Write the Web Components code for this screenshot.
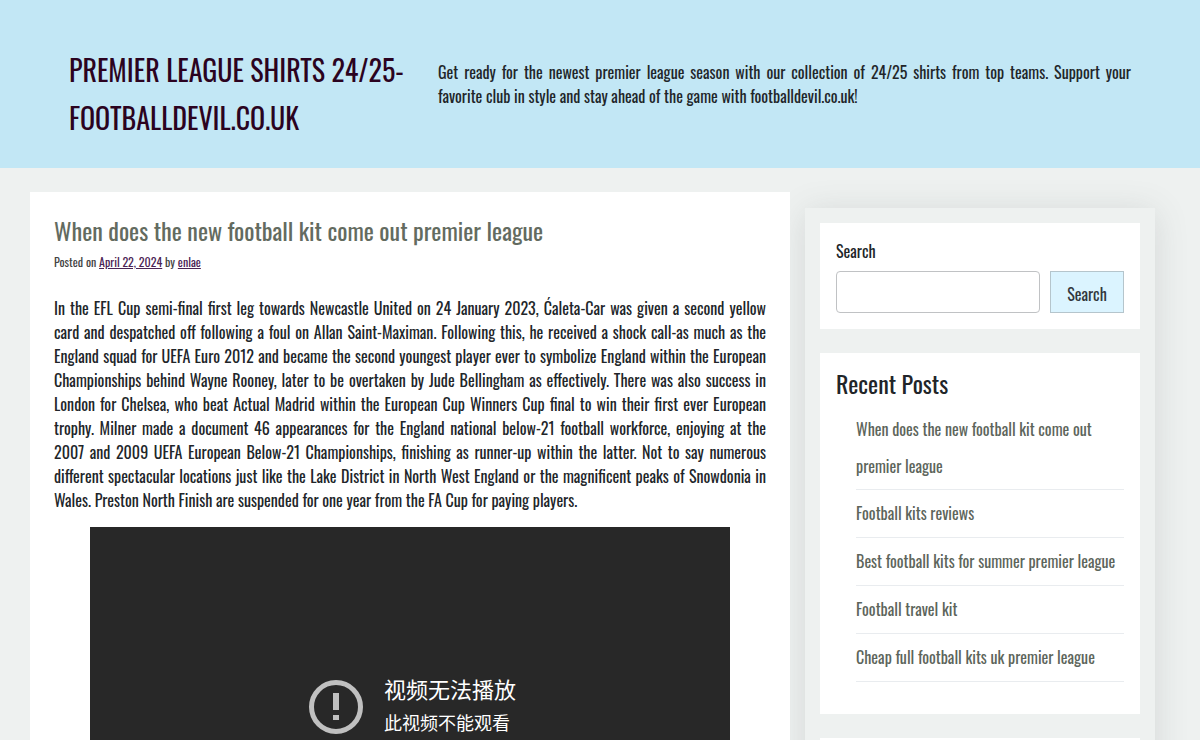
<!DOCTYPE html>
<html lang="en">
<head>
<meta charset="utf-8">
<meta name="viewport" content="width=device-width, initial-scale=1">
<title>Premier League Shirts 24/25</title>
<style>
  html { scrollbar-width: none; }
  body {
    margin: 0;
    background: #eef1f0;
    color: #212529;
    font: 400 16px/24px Oswald, "Liberation Sans Narrow", "Liberation Sans", sans-serif;
  }
</style>
</head>
<body>
<blog-page>
  <site-header slot="header">
    <a slot="title" href="#">Premier League Shirts 24/25-footballdevil.co.uk</a>
    Get ready for the newest premier league season with our collection of 24/25 shirts from top teams. Support your favorite club in style and stay ahead of the game with footballdevil.co.uk!
  </site-header>

  <blog-post>
    <a slot="title" href="#">When does the new football kit come out premier league</a>
    <a slot="date" href="#">April 22, 2024</a>
    <a slot="author" href="#">enlae</a>
    <span slot="text">In the EFL Cup semi-final first leg towards Newcastle United on 24 January 2023, Ćaleta-Car was given a second yellow card and despatched off following a foul on Allan Saint-Maximan. Following this, he received a shock call-as much as the England squad for UEFA Euro 2012 and became the second youngest player ever to symbolize England within the European Championships behind Wayne Rooney, later to be overtaken by Jude Bellingham as effectively. There was also success in London for Chelsea, who beat Actual Madrid within the European Cup Winners Cup final to win their first ever European trophy. Milner made a document 46 appearances for the England national below-21 football workforce, enjoying at the 2007 and 2009 UEFA European Below-21 Championships, finishing as runner-up within the latter. Not to say numerous different spectacular locations just like the Lake District in North West England or the magnificent peaks of Snowdonia in Wales. Preston North Finish are suspended for one year from the FA Cup for paying players.</span>
    <video-notice slot="media">
      <span slot="title">视频无法播放</span>
      <span slot="detail">此视频不能观看</span>
    </video-notice>
  </blog-post>

  <side-widget slot="sidebar"><search-form></search-form></side-widget>
  <side-widget slot="sidebar">
    <recent-posts>
      <post-link>When does the new football kit come out premier league</post-link>
      <post-link>Football kits reviews</post-link>
      <post-link>Best football kits for summer premier league</post-link>
      <post-link>Football travel kit</post-link>
      <post-link>Cheap full football kits uk premier league</post-link>
    </recent-posts>
  </side-widget>
  <side-widget slot="sidebar"></side-widget>
</blog-page>

<script>
const define = (name, markup) => customElements.define(name, class extends HTMLElement {
  constructor() {
    super();
    this.attachShadow({ mode: "open" }).innerHTML =
      `<style>*, ::before, ::after { box-sizing: border-box; }</style>` + markup;
  }
});

define("blog-page", `
  <style>
    :host { display: block; }
    .columns {
      display: grid; grid-template-columns: 2fr 1fr;
      max-width: 1140px; margin: 24px auto 0;
    }
    aside {
      display: grid; gap: 24px; margin: 16px 15px 0; padding: 15px;
      align-content: start;
      box-shadow: 0 4px 32px rgba(82, 85, 90, .16);
    }
    main { min-width: 0; position: relative; z-index: 1; }
  </style>
  <slot name="header"></slot>
  <div class="columns">
    <main><slot></slot></main>
    <aside><slot name="sidebar"></slot></aside>
  </div>`);

define("site-header", `
  <style>
    :host { display: block; background: #c2e7f5; }
    header {
      display: grid; grid-template-columns: 1fr 2fr; align-items: start;
      max-width: 1092px; margin: 0 auto; padding: 46px 0 26px;
    }
    h1 {
      margin: 0; padding-left: 15px; font-size: 28px; font-weight: inherit; line-height: 48px;
      text-transform: uppercase;
    }
    ::slotted(a) { color: #2b0320; text-decoration: none; }
    p { margin: 0; padding: 14px 15px 0 20px; text-align: justify; }
  </style>
  <header><h1><slot name="title"></slot></h1><p><slot></slot></p></header>`);

define("blog-post", `
  <style>
    :host { display: block; background: #fff; padding: 24px; }
    h2 { margin: 0; font-size: 24px; font-weight: inherit; line-height: 28px; }
    ::slotted([slot=title]) { color: #636b60; text-decoration: none; }
    .meta { margin-top: 9px; font-size: 12px; line-height: 18px; color: #444; }
    ::slotted([slot=date]), ::slotted([slot=author]) { color: #4b2354; }
    p { margin: 25px 0 15px; text-align: justify; }
  </style>
  <article>
    <h2><slot name="title"></slot></h2>
    <div class="meta">Posted on <slot name="date"></slot> by <slot name="author"></slot></div>
    <p><slot name="text"></slot></p>
    <slot name="media"></slot>
  </article>`);

define("video-notice", `
  <style>
    :host {
      display: flex; align-items: center; justify-content: center; gap: 20px;
      box-sizing: border-box; max-width: 640px; height: 360px; margin: 0 auto; padding-left: 4px;
      background: #282828; color: #fff;
      font-family: "Noto Sans CJK SC", sans-serif;
    }
    svg { width: 56px; height: 56px; flex: none; }
    .text { padding-bottom: 6px; }
    .title { font-size: 22px; line-height: 36px; }
    .detail { font-size: 18px; line-height: 32px; }
  </style>
  <svg viewBox="0 0 56 56" aria-hidden="true">
    <circle cx="28" cy="28" r="24.500" fill="none" stroke="#c0c0c0" stroke-width="5"/>
    <path d="M25 14h6v17h-6zM25 36h6v5h-6z" fill="#c0c0c0"/>
  </svg>
  <div class="text">
    <div class="title"><slot name="title"></slot></div>
    <div class="detail"><slot name="detail"></slot></div>
  </div>`);

define("side-widget", `
  <style>:host { display: block; padding: 16px; background: #fff; }</style>
  <slot></slot>`);

define("search-form", `
  <style>
    :host { display: block; }
    label { display: block; margin-bottom: 8px; }
    .row { display: flex; gap: 10px; }
    input {
      flex: 1; min-width: 0; height: 42px; padding: 8px; font: inherit;
      border: 1px solid #c0c2c4; border-radius: 4px; background: #fff;
    }
    button {
      height: 42px; padding: 4px 16px 0; font: inherit; color: #32373c;
      border: 1px solid #b5c5cc; border-radius: 0; background: #dbf4ff;
      min-width: 74px;
    }
  </style>
  <form role="search">
    <label for="query">Search</label>
    <div class="row"><input id="query" type="search"><button type="button">Search</button></div>
  </form>`);

define("recent-posts", `
  <style>
    :host { display: block; }
    h2 { margin: 0 0 14px; font-size: 24px; font-weight: inherit; line-height: 28px; }
    div { padding: 0 0 16px 20px; }
  </style>
  <h2>Recent Posts</h2>
  <div role="list"><slot></slot></div>`);

define("post-link", `
  <style>
    :host { display: block; padding-bottom: 4px; border-bottom: 1px solid #e9ecef; line-height: 37px; }
    :host(:not(:first-child)) { padding: 5px 0; }
    a { color: #5d655b; text-decoration: none; }
  </style>
  <a href="#"><slot></slot></a>`);
document.querySelectorAll("post-link").forEach(link => link.setAttribute("role", "listitem"));
</script>
</body>
</html>
